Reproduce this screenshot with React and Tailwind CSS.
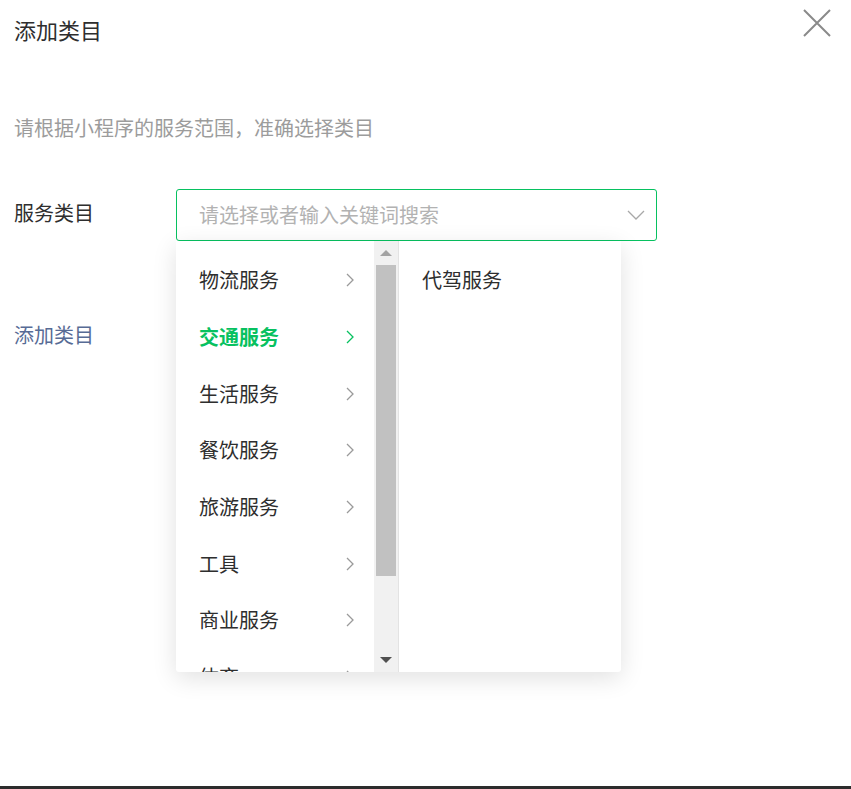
import React from "react";

const font = { fontFamily: '"Noto Sans CJK SC", "Noto Sans", sans-serif' };

const left = ["物流服务", "交通服务", "生活服务", "餐饮服务", "旅游服务", "工具", "商业服务", "体育"];

function Chevron({ color }) {
  return (
    <svg width="10" height="16" viewBox="0 0 10 16" fill="none">
      <path d="M2 2 L8 8 L2 14" stroke={color} strokeWidth="1.3" />
    </svg>
  );
}

export default function App() {
  return (
    <div
      className="relative w-[851px] h-[789px] bg-white flex flex-col overflow-hidden"
      style={font}
    >
      <div className="flex-1 flex flex-col pl-[14px]">
        <div className="flex items-center justify-between h-[66px] pr-[20px]">
          <div className="text-[22px] text-[#2e2e2e] pb-[8px]">添加类目</div>
          <svg width="28" height="28" viewBox="0 0 28 28" className="-mt-[20px]">
            <path d="M1 1 L27 27 M27 1 L1 27" stroke="#8a8a8a" strokeWidth="2" />
          </svg>
        </div>
        <div className="mt-[47px] text-[20px] text-[#9c9c9c] leading-[30px]">
          请根据小程序的服务范围，准确选择类目
        </div>
        <div className="flex mt-[46px]">
          <div className="w-[162px] text-[20px] text-[#2e2e2e] pt-[9px] leading-[30px]">服务类目</div>
          <div className="relative">
            <div className="w-[481px] h-[52px] border border-[#07c160] rounded-[3px] flex items-center justify-between pl-[22px] pr-[10px]">
              <span className="text-[20px] text-[#b2b2b2]">请选择或者输入关键词搜索</span>
              <svg width="18" height="10" viewBox="0 0 18 10" fill="none" className="mr-[1px]">
                <path d="M1 1 L9 9 L17 1" stroke="#a8a8a8" strokeWidth="1.3" />
              </svg>
            </div>
            <div className="absolute left-0 top-[52px] w-[445px] h-[431px] bg-white flex rounded-b-[3px] shadow-[0_6px_24px_rgba(0,0,0,0.12)] z-10 overflow-hidden">
              <div className="w-[198px] h-full overflow-hidden pt-[11px]">
                {left.map((t, i) => (
                  <div key={t} className="h-[56.7px] flex items-center justify-between pl-[23px] pr-[19px]">
                    <span
                      className={
                        i === 1
                          ? "text-[20px] text-[#07c160] font-bold"
                          : "text-[20px] text-[#2e2e2e]"
                      }
                    >
                      {t}
                    </span>
                    <Chevron color={i === 1 ? "#07c160" : "#9a9a9a"} />
                  </div>
                ))}
              </div>
              <div className="w-[25px] h-full bg-[#f1f1f1] border-r border-[#e3e3e3] flex flex-col items-center">
                <svg width="12" height="8" viewBox="0 0 12 8" className="mt-[8px]">
                  <path d="M0 7 L6 1 L12 7 Z" fill="#a3a3a3" />
                </svg>
                <div className="w-[20px] h-[311px] bg-[#c1c1c1] mt-[8px]" />
                <div className="flex-1" />
                <svg width="12" height="8" viewBox="0 0 12 8" className="mb-[8px]">
                  <path d="M0 1 L12 1 L6 7 Z" fill="#505050" />
                </svg>
              </div>
              <div className="flex-1 pl-[23px] pt-[11px]">
                <div className="h-[56.7px] flex items-center text-[20px] text-[#2e2e2e]">代驾服务</div>
              </div>
            </div>
          </div>
        </div>
        <div className="mt-[79px] text-[20px] text-[#576b95] leading-[30px]">添加类目</div>
      </div>
      <div className="h-[3px] bg-[#2c2c2c]" />
    </div>
  );
}
